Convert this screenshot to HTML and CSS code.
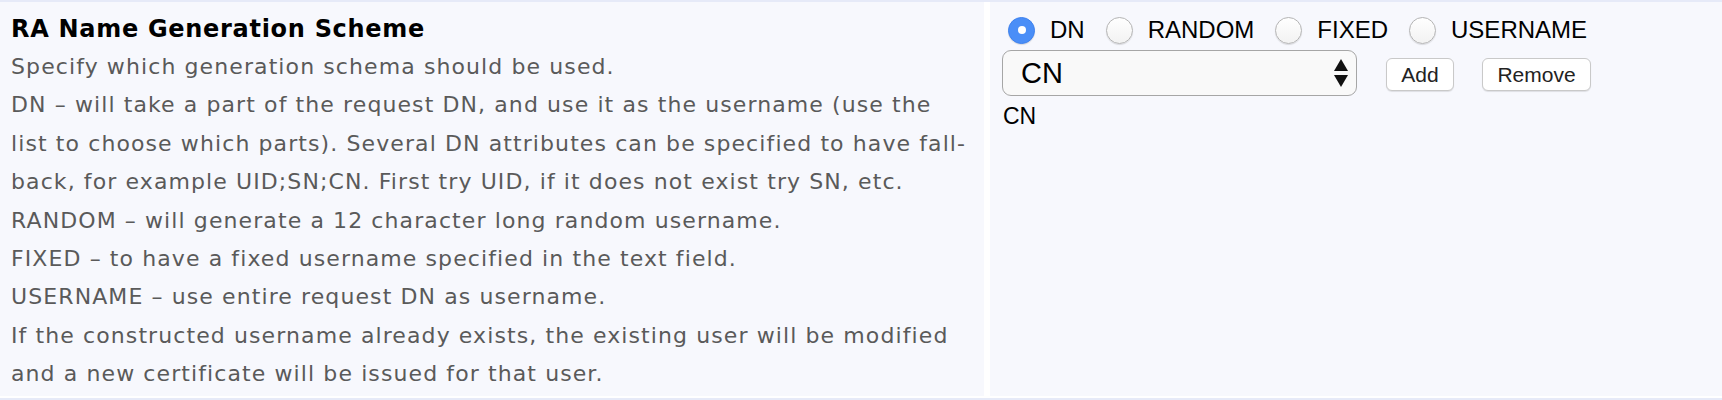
FILE: index.html
```html
<!DOCTYPE html>
<html>
<head>
<title>RA Name Generation Scheme</title>
<link rel="stylesheet" href="styles.css">
</head>
<body>

<div class='band'></div>

<div class='row'>

    <div class='cell label-cell'>
        <div class='title'>RA Name Generation Scheme</div>
        <div class='help'>
            Specify which generation schema should be used.<br>
            DN – will take a part of the request DN, and use it as the username (use the<br>
            list to choose which parts). Several DN attributes can be specified to have fall-<br>
            back, for example UID;SN;CN. First try UID, if it does not exist try SN, etc.<br>
            RANDOM – will generate a 12 character long random username.<br>
            FIXED – to have a fixed username specified in the text field.<br>
            USERNAME – use entire request DN as username.<br>
            If the constructed username already exists, the existing user will be modified<br>
            and a new certificate will be issued for that user.
        </div>
    </div>

    <div class='cell value-cell'>
        <div class='radios'>
            <label class='radio'><input type='radio' name='scheme' checked><span>DN</span></label>
            <label class='radio'><input type='radio' name='scheme'><span>RANDOM</span></label>
            <label class='radio'><input type='radio' name='scheme'><span>FIXED</span></label>
            <label class='radio'><input type='radio' name='scheme'><span>USERNAME</span></label>
        </div>
        <div class='dn-row'>
            <div class='select'>
                <span>CN</span>
                <svg class='arrows' width='14' height='28' viewBox='0 0 14 28'>
                    <path d='M7 0 L14 12 L0 12 Z' fill='#111'/>
                    <path d='M0 16 L14 16 L7 28 Z' fill='#111'/>
                </svg>
            </div>
            <button class='btn btn-add'>Add</button>
            <button class='btn btn-remove'>Remove</button>
        </div>
        <div class='dn-value'>CN</div>
    </div>

</div>

<div class='band'></div>

</body>
</html>
```

FILE: styles.css
```css
/* one row of the admin settings table */

html, body {
    margin: 0px;
    background: #ffffff;
}

.band {
    height: 2px;
    background: #e6eaf8;
}

.row {
    display: flex;
    flex-flow: row;
    gap: 6px;
    height: 394px;
    margin-bottom: 2px;
}

.cell {
    box-sizing: border-box;
    background: #f7f8fd;
}

.label-cell {
    width: 984px;
    padding: 8px 11px;
    font-family: "DejaVu Sans", Verdana, sans-serif;
    white-space: nowrap;
}

.title {
    font-size: 24px;
    font-weight: bold;
    letter-spacing: 0.7px;
    line-height: 38px;
    color: #000;
}

.help {
    font-size: 22px;
    letter-spacing: 1.1px;
    line-height: 38.4px;
    color: #5a5a5a;
}

.value-cell {
    flex: 1;
    padding: 15px 12px 0px 12px;
    font-family: "Liberation Sans", Arial, sans-serif;
    color: #000;
}

/* radio group */

.radios {
    display: flex;
    align-items: center;
    height: 26px;
    padding-left: 6px;
}

.radio {
    display: flex;
    align-items: center;
    font-size: 24px;
    margin-right: 21px;
}

.radio input {
    -webkit-appearance: none;
    appearance: none;
    box-sizing: border-box;
    width: 27px;
    height: 27px;
    margin: 0px 15px 0px 0px;
    border-radius: 50%;
    border: 1px solid #b4b4b4;
    background: linear-gradient(#ffffff, #f2f2f2);
    box-shadow: 0px 1px 1px rgba(0, 0, 0, 0.12);
    position: relative;
}

.radio input:checked {
    border-color: #3d82f0;
    background: #4a8ef7;
}

.radio input:checked::after {
    content: '';
    position: absolute;
    width: 8px;
    height: 8px;
    border-radius: 50%;
    background: #ffffff;
    left: 8.5px;
    top: 8.5px;
}

/* DN part chooser */

.dn-row {
    display: flex;
    align-items: flex-start;
    margin-top: 7px;
}

.select {
    box-sizing: border-box;
    width: 355px;
    height: 46px;
    border: 1.5px solid #a6a6a6;
    border-radius: 9px;
    background: #f9f9f9;
    display: flex;
    align-items: center;
    justify-content: space-between;
    padding: 0px 8px 0px 18px;
    font-size: 29px;
}

.arrows {
    display: block;
}

.btn {
    box-sizing: border-box;
    height: 33px;
    margin-top: 8px;
    border: 1px solid #c9c9c9;
    border-radius: 6px;
    background: #ffffff;
    box-shadow: 0px 1px 1px rgba(0, 0, 0, 0.1);
    font-family: "Liberation Sans", Arial, sans-serif;
    font-size: 21px;
    color: #222;
    padding: 0px;
}

.btn-add {
    width: 68px;
    margin-left: 29px;
}

.btn-remove {
    width: 109px;
    margin-left: 28px;
}

.dn-value {
    font-size: 23px;
    margin-top: 7px;
    padding-left: 1px;
}
```
